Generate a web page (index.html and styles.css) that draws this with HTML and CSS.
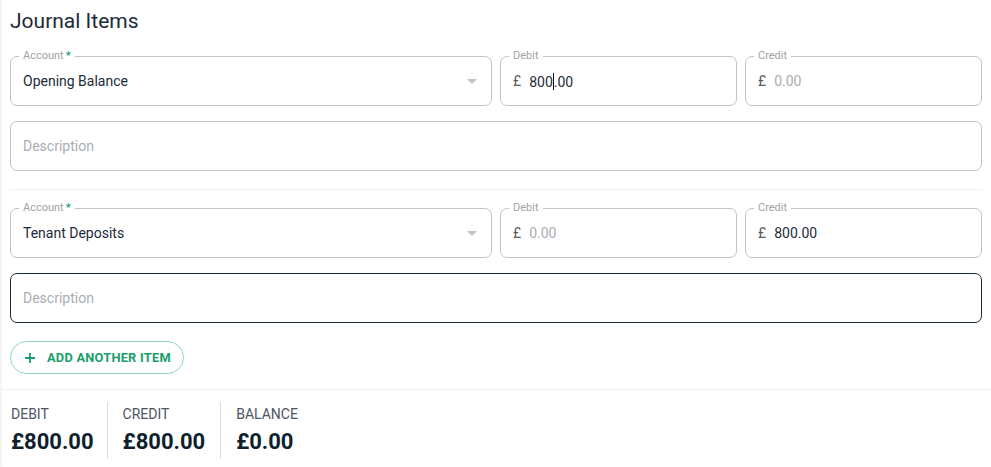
FILE: index.html
```html
<!DOCTYPE html>
<html>
<head>
<meta charset="utf-8">
<link rel="stylesheet" href="styles.css">
</head>
<body>
<div class="page">
  <h2 class="title">Journal Items</h2>

  <div class="item">
    <div class="row">
      <div class="field">
        <span class="label">Account<span class="req">*</span></span>
        <span class="value">Opening Balance</span>
        <span class="arrow"></span>
      </div>
      <div class="field">
        <span class="label">Debit</span>
        <span class="cur">£</span><span class="value">800<span class="caret"></span>.00</span>
      </div>
      <div class="field">
        <span class="label">Credit</span>
        <span class="cur">£</span><span class="placeholder">0.00</span>
      </div>
    </div>
    <div class="field desc">
      <span class="placeholder">Description</span>
    </div>
  </div>

  <div class="divider"></div>

  <div class="item">
    <div class="row">
      <div class="field">
        <span class="label">Account<span class="req">*</span></span>
        <span class="value">Tenant Deposits</span>
        <span class="arrow"></span>
      </div>
      <div class="field">
        <span class="label">Debit</span>
        <span class="cur">£</span><span class="placeholder">0.00</span>
      </div>
      <div class="field">
        <span class="label">Credit</span>
        <span class="cur">£</span><span class="value">800.00</span>
      </div>
    </div>
    <div class="field desc focused">
      <span class="placeholder">Description</span>
    </div>
  </div>

  <button class="add-btn">
    <svg width="12" height="12" viewBox="0 0 12 12"><path d="M6 1v10M1 6h10" stroke="#1a9e6a" stroke-width="1.8" fill="none"/></svg>
    <span>ADD ANOTHER ITEM</span>
  </button>
</div>

<div class="divider full"></div>

<div class="summary">
  <div class="stat">
    <div class="stat-label">DEBIT</div>
    <div class="stat-value">£800.00</div>
  </div>
  <div class="stat">
    <div class="stat-label">CREDIT</div>
    <div class="stat-value">£800.00</div>
  </div>
  <div class="stat">
    <div class="stat-label">BALANCE</div>
    <div class="stat-value">£0.00</div>
  </div>
</div>
</body>
</html>
```

FILE: styles.css
```css
* { box-sizing: border-box; }
html, body { margin: 0; background: #fff; }
body {
  font-family: Roboto, "Noto Sans", sans-serif;
  color: #1c2b39;
  width: 991px;
  height: 467px;
  overflow: hidden;
  background: linear-gradient(to right, #f1f2f3 0, #fafafa 2px, #fff 3px);
}
.page {
  padding: 9px 9px 0 10px;
}
.title {
  margin: 0;
  font-size: 21px;
  font-weight: 400;
  line-height: 24px;
  color: #1c2b39;
}
.item {
  display: flex;
  flex-direction: column;
  gap: 15px;
}
.title + .item { margin-top: 23px; }
.row {
  display: grid;
  grid-template-columns: 482px 1fr 1fr;
  gap: 8px;
}
.field {
  position: relative;
  height: 50px;
  border: 1px solid #c4c4c4;
  border-radius: 7px;
  display: flex;
  align-items: center;
  padding: 0 12px;
  font-size: 14px;
}
.label {
  position: absolute;
  left: 8px;
  top: -8px;
  padding: 0 4px;
  background: #fff;
  font-size: 11px;
  line-height: 14px;
  color: #a3a3a3;
}
.req { color: #1aa36f; margin-left: 2px; font-weight: 700; }
.value { color: #1c2b39; }
.placeholder { color: #a8aeb4; }
.cur { color: #5c5a58; margin-right: 8px; }
.caret {
  display: inline-block;
  width: 1px;
  height: 17px;
  background: #111;
  vertical-align: -3px;
}
.arrow {
  margin-left: auto;
  margin-right: 2px;
  width: 0; height: 0;
  border-left: 5px solid transparent;
  border-right: 5px solid transparent;
  border-top: 5px solid #c2c2c2;
}
.desc.focused { border-color: #1c2b39; }
.divider {
  height: 1px;
  background: #eff0f1;
  margin: 18px 0;
}
.divider.full { margin: 15px 0 0 0; }
.add-btn {
  margin-top: 18px;
  height: 33px;
  width: 174px;
  border: 1px solid #8fd7b6;
  border-radius: 17px;
  background: #fff;
  display: flex;
  align-items: center;
  padding: 0 0 0 13px;
  gap: 11px;
  font-family: Roboto, sans-serif;
  font-weight: 700;
  font-size: 12.8px;
  letter-spacing: 0.25px;
  color: #1a9e6a;
  cursor: pointer;
}
.summary {
  display: flex;
  padding: 12px 0 0 11px;
}
.stat {
  padding: 4px 15px 0 15px;
  border-right: 1px solid #dcdcdc;
  height: 57px;
}
.stat:first-child { padding-left: 0; padding-right: 13px; }
.stat:last-child { border-right: none; }
.stat-label {
  font-size: 14px;
  line-height: 16px;
  color: #4b5563;
}
.stat-value {
  margin-top: 7px;
  font-size: 22px;
  line-height: 26px;
  font-weight: 700;
  color: #0f1f2e;
}
```
